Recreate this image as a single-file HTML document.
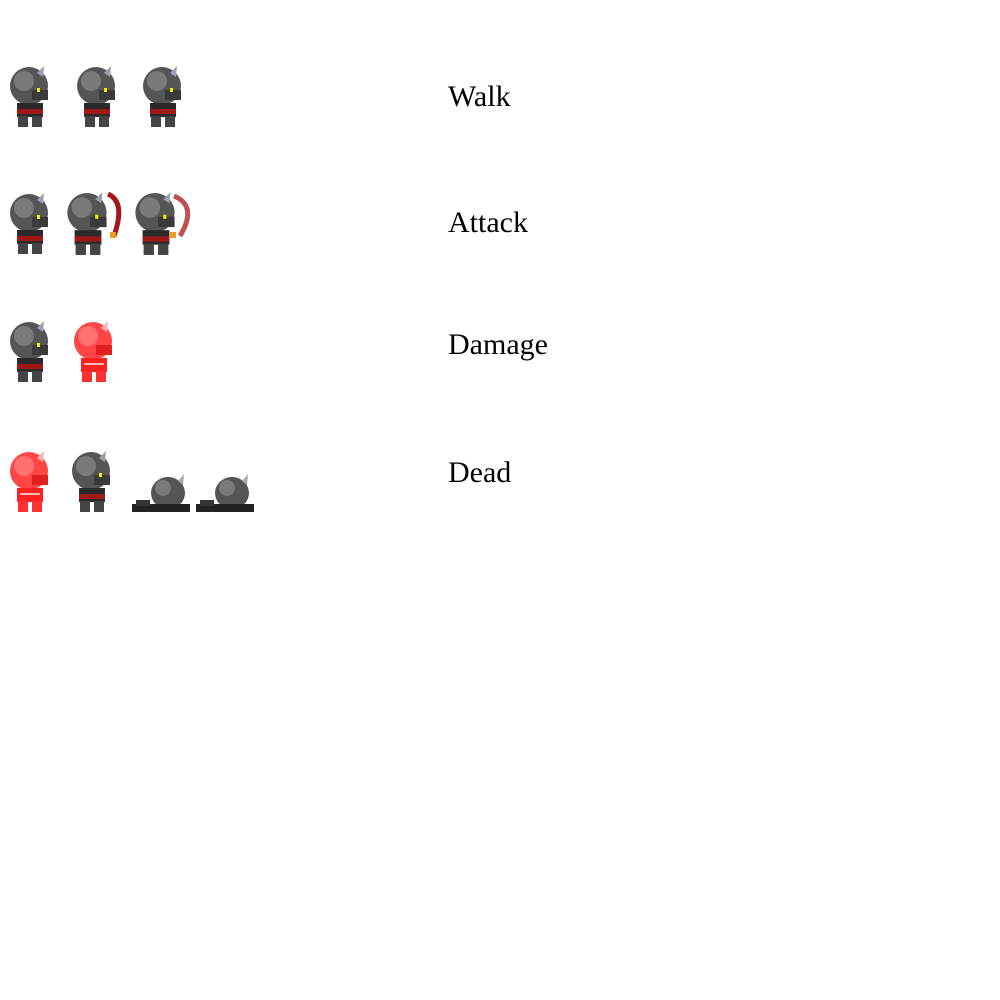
<!DOCTYPE html>
<html><head><style>
html,body{margin:0;padding:0;background:#fff;width:1000px;height:1000px;overflow:hidden}
.s{position:absolute}
.t{position:absolute;left:448px;font-family:"Liberation Serif",serif;font-size:30px;color:#000;line-height:1}
</style></head><body>
<svg width="0" height="0" style="position:absolute">
<defs>
<symbol id="g" viewBox="0 0 40 62">
<circle cx="19" cy="20" r="19" fill="#555"/>
<circle cx="14" cy="15" r="10" fill="#7a7a7a"/>
<path d="M27 7 L34 0 L33 11 Z" fill="#9aa0b0"/>
<rect x="22" y="24" width="16" height="10" fill="#3a3a3a"/>
<rect x="27" y="22" width="3" height="4" fill="#ee0"/>
<rect x="7" y="37" width="26" height="14" fill="#2a2a2a"/>
<rect x="7" y="43" width="26" height="5" fill="#a01818"/>
<rect x="8" y="50" width="10" height="11" fill="#444"/>
<rect x="22" y="50" width="10" height="11" fill="#444"/>
</symbol>
<symbol id="r" viewBox="0 0 40 62">
<circle cx="19" cy="20" r="19" fill="#ff4545"/>
<circle cx="14" cy="15" r="10" fill="#ff7070"/>
<path d="M27 7 L34 0 L33 11 Z" fill="#ffb0b0"/>
<rect x="22" y="24" width="16" height="10" fill="#e02020"/>
<rect x="7" y="37" width="26" height="14" fill="#ff2020"/>
<rect x="10" y="42" width="20" height="2" fill="#ffbbbb"/>
<rect x="8" y="50" width="10" height="11" fill="#ff3030"/>
<rect x="22" y="50" width="10" height="11" fill="#ff3030"/>
</symbol>
<symbol id="d" viewBox="0 0 62 40">
<ellipse cx="38" cy="19" rx="17" ry="16" fill="#555"/>
<circle cx="33" cy="14" r="8" fill="#7a7a7a"/>
<path d="M48 7 L54 0 L53 11 Z" fill="#aaa"/>
<rect x="2" y="30" width="58" height="8" fill="#222"/>
<rect x="6" y="26" width="14" height="6" fill="#333"/>
</symbol>
</defs>
</svg>
<svg class="s" style="left:10px;top:66px" width="40" height="62"><use href="#g"/></svg>
<svg class="s" style="left:77px;top:66px" width="40" height="62"><use href="#g"/></svg>
<svg class="s" style="left:143px;top:66px" width="40" height="62"><use href="#g"/></svg>

<svg class="s" style="left:10px;top:192px" width="40" height="64"><use href="#g"/></svg>
<svg class="s" style="left:66px;top:192px" width="60" height="64"><use href="#g" width="44" height="64"/><path d="M42 2 Q60 10 48 44" stroke="#a01818" stroke-width="5" fill="none"/><rect x="44" y="40" width="6" height="6" fill="#e8a020"/></svg>
<svg class="s" style="left:130px;top:192px" width="64" height="64"><use href="#g" x="4" width="44" height="64"/><path d="M44 4 Q68 14 50 44" stroke="#c05050" stroke-width="5" fill="none"/><rect x="40" y="40" width="6" height="6" fill="#e8a020"/></svg>

<svg class="s" style="left:10px;top:320px" width="40" height="64"><use href="#g"/></svg>
<svg class="s" style="left:74px;top:320px" width="40" height="64"><use href="#r"/></svg>

<svg class="s" style="left:10px;top:450px" width="40" height="64"><use href="#r"/></svg>
<svg class="s" style="left:72px;top:450px" width="40" height="64"><use href="#g"/></svg>
<svg class="s" style="left:130px;top:474px" width="62" height="40"><use href="#d"/></svg>
<svg class="s" style="left:194px;top:474px" width="62" height="40"><use href="#d"/></svg>

<div class="t" style="top:82px">Walk</div>
<div class="t" style="top:208px">Attack</div>
<div class="t" style="top:330px">Damage</div>
<div class="t" style="top:458px">Dead</div>
</body></html>
